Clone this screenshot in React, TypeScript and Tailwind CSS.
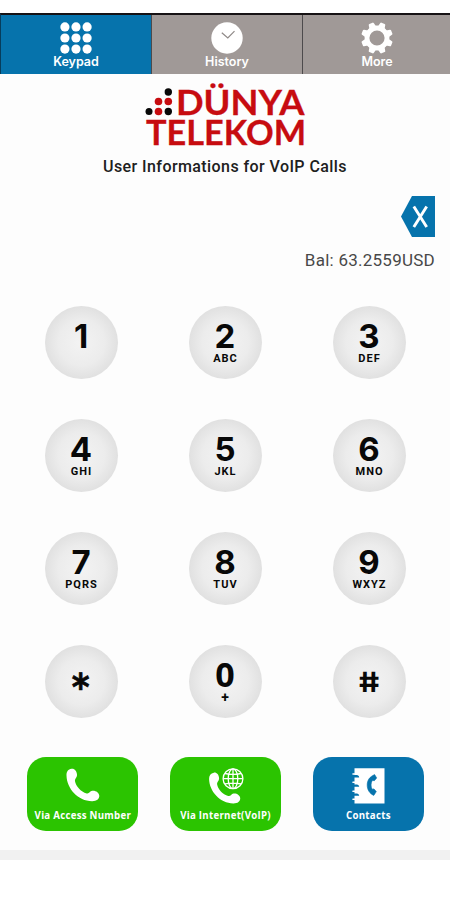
import React from "react";

const keys = [
  { digit: "1", letters: "" },
  { digit: "2", letters: "ABC" },
  { digit: "3", letters: "DEF" },
  { digit: "4", letters: "GHI" },
  { digit: "5", letters: "JKL" },
  { digit: "6", letters: "MNO" },
  { digit: "7", letters: "PQRS" },
  { digit: "8", letters: "TUV" },
  { digit: "9", letters: "WXYZ" },
  { digit: "*", letters: "" },
  { digit: "0", letters: "+" },
  { digit: "#", letters: "" },
];

const DotsIcon = () => (
  <svg viewBox="0 0 32 32" className="h-8 w-8" fill="#fff">
    {[4.9, 16, 27.1].map((y) =>
      [4.9, 16, 27.1].map((x) => <circle key={`${x}-${y}`} cx={x} cy={y} r="4.6" />)
    )}
  </svg>
);

const ClockIcon = () => (
  <svg viewBox="0 0 32 32" className="h-8 w-8">
    <circle cx="16" cy="16" r="15.7" fill="#fff" />
    <path d="M10.8 10.8 16.8 16 23.5 9.2" fill="none" stroke="#8f8987" strokeWidth="1.2" />
  </svg>
);

const GearIcon = () => (
  <svg viewBox="0 0 32 32" className="h-8 w-8">
    <circle cx="16" cy="16" r="10" fill="none" stroke="#fff" strokeWidth="4.8" />
    {[22.5, 67.5, 112.5, 157.5, 202.5, 247.5, 292.5, 337.5].map((a) => (
      <path
        key={a}
        d="M12.2 6 13.3 .9Q13.5 .1 14.3 .1H17.7Q18.5 .1 18.7 .9L19.8 6Z"
        fill="#fff"
        transform={`rotate(${a} 16 16)`}
      />
    ))}
  </svg>
);

const Handset = () => (
  <path
    d="M5.5 .8C2.2 1.2 .4 3.7 .5 7.5C.8 20.8 12.2 33 26 33.2C30.6 33.3 33.2 31.1 33.3 28C33.4 24.5 29.2 22.2 26.2 22.8C23.7 23.2 23.3 26 20.7 25.4C14.8 23.8 9.8 18 9 13.2C8.6 10.6 11.3 9.4 11 6.4C10.7 3 8.6 .4 5.5 .8Z"
    fill="#fff"
  />
);

const PhoneIcon = () => (
  <svg viewBox="0 0 34 34" className="mt-px h-[34px] w-[34px]">
    <Handset />
  </svg>
);

const VoipIcon = () => (
  <svg viewBox="0 0 36 36" className="mt-px h-9 w-9">
    <g transform="translate(.6 3.9) scale(.95)">
      <Handset />
    </g>
    <circle cx="25" cy="10.7" r="11.2" fill="#2bc400" />
    <g fill="none" stroke="#fff" strokeWidth="1.3">
      <circle cx="25" cy="10.7" r="9.9" />
      <ellipse cx="25" cy="10.7" rx="4.8" ry="9.9" />
      <path d="M25 .9V20.5M15.2 10.7H34.8M17 5.5Q25 7.2 33 5.5M17 15.9Q25 14.2 33 15.9" />
    </g>
  </svg>
);

const ContactsIcon = () => (
  <svg viewBox="0 0 33 36" className="mt-px h-9 w-[33px]">
    <path d="M2.5 .3H32.5V35.5H2.5Z" fill="#fff" />
    {[7, 16.4, 25.4].map((y) => (
      <path key={y} d={`M1 ${y}H5.2Q7.4 ${y + 0.6} 7.2 ${y + 2.4}H1`} fill="#0673ac" />
    ))}
    <g stroke="#fff" strokeWidth="1.6" strokeLinecap="round">
      <path d="M1 6H6M1 14.2H6M1 23.2H6M1 31.2H6" />
    </g>
    <path
      d="M22.6 6.6C17.5 8.8 15.2 12.4 15.2 17C15.2 21.8 17.6 25.6 21.8 27.4L24.3 23.6L22 20.9L20.2 21.3C18.6 18.8 18.7 15 20.3 12.4L22.4 12.7L24.7 9.9Z"
      fill="#0673ac"
      stroke="#0673ac"
      strokeWidth=".6"
      strokeLinejoin="round"
    />
  </svg>
);

const Logo = () => (
  <svg viewBox="0 0 162 60" className="h-[60px] w-[162px] overflow-visible" fill="#c70c10">
    <g>
      <circle cx="24.3" cy="6" r="3.7" fill="#080808" />
      <circle cx="14.5" cy="15.5" r="3.8" />
      <circle cx="24.3" cy="15.5" r="3.8" />
      <circle cx="5" cy="25.5" r="3.5" fill="#080808" />
      <circle cx="14.5" cy="25.5" r="3.8" />
      <circle cx="24.3" cy="25.5" r="3.7" fill="#080808" />
    </g>
    <g fontFamily="Lato, sans-serif" fontWeight="700" fontSize="34.5" stroke="#c70c10" strokeWidth=".3">
      <text x="32" y="29.2" textLength="128.5" lengthAdjust="spacingAndGlyphs">DÜNYA</text>
      <text x="2" y="59" textLength="160" lengthAdjust="spacingAndGlyphs">TELEKOM</text>
    </g>
  </svg>
);

function Tab({ label, active, last, children }: { label: string; active?: boolean; last?: boolean; children: React.ReactNode }) {
  return (
    <div
      className={`flex flex-col items-center pt-[7px] ${active ? "w-[151px] bg-[#0673ac]" : "bg-[#a09997]"} ${last ? "flex-1 pl-px" : "border-r-[1.5px] border-[#4d4a4c]"} ${!active && !last ? "w-[151px]" : ""}`}
    >
      {children}
      <span className="mt-px font-[Inter,sans-serif] text-[12.5px] leading-[14px] font-semibold text-white">{label}</span>
    </div>
  );
}

function Action({ label, blue, children }: { label: string; blue?: boolean; children: React.ReactNode }) {
  return (
    <div className={`flex h-[74px] w-[111px] flex-col items-center rounded-[19px] pt-[10px] ${blue ? "bg-[#0673ac]" : "bg-[#2bc400]"}`}>
      <div className="flex h-[38px] items-start">{children}</div>
      <span className="mt-[3px] scale-x-[.88] font-['Open_Sans',sans-serif] text-[11px] leading-[14px] font-bold tracking-[0.3px] whitespace-nowrap text-white">{label}</span>
    </div>
  );
}

const digitStyle = (digit: string) => {
  if (digit === "*") return "mt-[8px] h-[44px] scale-x-[.92] font-['DejaVu_Sans',sans-serif] text-[37px] leading-[44px] [-webkit-text-stroke:0.7px_#080808]";
  if (digit === "#") return "mt-[2px] h-[44px] scale-x-[1.18] skew-x-[9deg] font-[Inter,sans-serif] text-[28px] leading-[44px]";
  if (digit === "0") return "h-[34px] font-['Open_Sans',sans-serif] text-[34px] leading-[32px]";
  return "h-[34px] font-[Inter,sans-serif] text-[33px] leading-[34px]";
};

export default function App() {
  return (
    <div className="h-[900px] w-[450px] overflow-hidden bg-white pt-[13px] font-[Roboto,sans-serif]">
      <header className="flex h-[61px] border-t-2 border-l border-t-[#161214] border-l-[#063d5c]">
        <Tab label="Keypad" active><DotsIcon /></Tab>
        <Tab label="History"><ClockIcon /></Tab>
        <Tab label="More" last><GearIcon /></Tab>
      </header>

      <main className="h-[776px] bg-[#fdfdfd]">
        <div className="flex flex-col items-center pt-[12px]">
          <Logo />
          <h1 className="mt-[11px] text-[16px] leading-[20px] font-medium tracking-[0.42px] whitespace-nowrap text-[#202020]">
            User Informations for VoIP Calls
          </h1>
        </div>
        <div className="mt-[19px] flex flex-col items-end pr-[15px]">
          <svg viewBox="0 0 34 41" className="h-[41px] w-[34px]">
            <path d="M0 20.5 11 0H34V41H11Z" fill="#0673ac" />
            <path d="M12.8 10.5 25.7 31M25.7 10.5 12.8 31" stroke="#fff" strokeWidth="2.9" />
          </svg>
          <p className="mt-[13px] text-[17px] leading-[20px] tracking-[0.25px] whitespace-nowrap text-[#484848]">Bal: 63.2559USD</p>
        </div>

        <div className="mt-[36px] ml-[9px] grid w-[432px] grid-cols-3 justify-items-center gap-y-[40px]">
          {keys.map(({ digit, letters }) => (
            <div
              key={digit}
              className="flex h-[73px] w-[73px] flex-col items-center rounded-full bg-[radial-gradient(circle,#f3f3f3_0%,#ececec_45%,#e0e0e0_72%)] pt-[13px] text-[#080808]"
            >
              <span className={`font-bold ${digitStyle(digit)}`}>{digit}</span>
              {letters && (
                <span className={`pl-px leading-[12px] font-bold tracking-[1px] ${letters === "+" ? "mt-[-1px] text-[14px]" : "text-[11px]"}`}>{letters}</span>
              )}
            </div>
          ))}
        </div>

        <div className="mt-[39px] flex gap-[32px] pl-[27px]">
          <Action label="Via Access Number"><PhoneIcon /></Action>
          <Action label="Via Internet(VoIP)"><VoipIcon /></Action>
          <Action label="Contacts" blue><ContactsIcon /></Action>
        </div>
      </main>
      <div className="h-[10px] bg-[#f1f1f1]" />
    </div>
  );
}
